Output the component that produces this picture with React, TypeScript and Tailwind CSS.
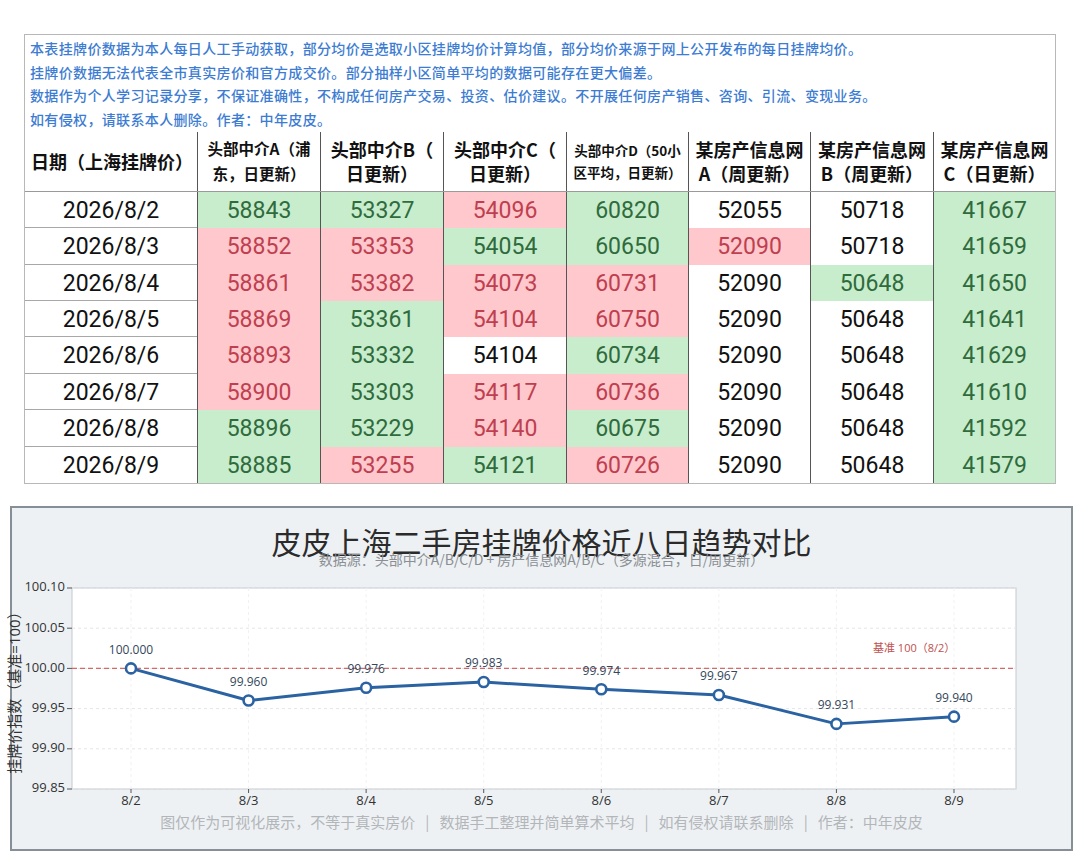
import React from "react";

type Tone = "g" | "r" | "n";

const toneClass: Record<Tone, string> = {
  g: "bg-[#c8edcd] text-[#2f6b3c]",
  r: "bg-[#fec8cd] text-[#bf3f50]",
  n: "bg-white text-[#111]",
};

// date, then "value+tone" for A/B/C/D/网A/网B/网C
const rows: [string, string][] = [
  ["2026/8/2", "58843g 53327g 54096r 60820g 52055n 50718n 41667g"],
  ["2026/8/3", "58852r 53353r 54054g 60650g 52090r 50718n 41659g"],
  ["2026/8/4", "58861r 53382r 54073r 60731r 52090n 50648g 41650g"],
  ["2026/8/5", "58869r 53361g 54104r 60750r 52090n 50648n 41641g"],
  ["2026/8/6", "58893r 53332g 54104n 60734g 52090n 50648n 41629g"],
  ["2026/8/7", "58900r 53303g 54117r 60736r 52090n 50648n 41610g"],
  ["2026/8/8", "58896g 53229g 54140r 60675g 52090n 50648n 41592g"],
  ["2026/8/9", "58885g 53255r 54121g 60726r 52090n 50648n 41579g"],
];

const notes = [
  "本表挂牌价数据为本人每日人工手动获取，部分均价是选取小区挂牌均价计算均值，部分均价来源于网上公开发布的每日挂牌均价。",
  "挂牌价数据无法代表全市真实房价和官方成交价。部分抽样小区简单平均的数据可能存在更大偏差。",
  "数据作为个人学习记录分享，不保证准确性，不构成任何房产交易、投资、估价建议。不开展任何房产销售、咨询、引流、变现业务。",
  "如有侵权，请联系本人删除。作者：中年皮皮。",
];

const gridCols = "grid grid-cols-[172px_123px_123px_123px_122px_122px_123px_122px]";

function PriceTable() {
  return (
    <div className="ml-[24px] mt-[34px] w-[1032px] border border-[#b8b8b8] font-['Noto_Sans_CJK_SC',sans-serif]">
      <div className="px-[5px] pt-[2px] text-[14px] leading-[23.7px] font-medium tracking-[0.35px] text-[#3c7cd2]">
        {notes.map((n) => (
          <div key={n}>{n}</div>
        ))}
      </div>

      <div className={`${gridCols} h-[60px] border-b border-[#9a9a9a] text-[#111] font-semibold`}>
        <div className="flex items-center pl-[6px] text-[18px]">日期（上海挂牌价）</div>
        <div className="flex flex-col items-center justify-center border-l border-[#555] text-[15.5px] leading-[25px]">
          <span>头部中介A（浦</span>
          <span>东，日更新）</span>
        </div>
        {["B", "C"].map((k) => (
          <div key={k} className="flex flex-col items-center justify-center border-l border-[#555] text-[18px] leading-[24px]">
            <span>头部中介{k}（</span>
            <span>日更新）</span>
          </div>
        ))}
        <div className="flex flex-col items-center justify-center border-l border-[#555] text-[13.5px] leading-[22px]">
          <span>头部中介D（50小</span>
          <span>区平均，日更新）</span>
        </div>
        {[
          ["A", "周"],
          ["B", "周"],
          ["C", "日"],
        ].map(([k, f]) => (
          <div key={k} className="flex flex-col items-center justify-center border-l border-[#555] text-[18px] leading-[24px]">
            <span>某房产信息网</span>
            <span>{k}（{f}更新）</span>
          </div>
        ))}
      </div>

      {rows.map(([date, line], ri) => (
        <div
          key={date}
          className={`${gridCols} h-[36.4px] ${ri < rows.length - 1 ? "border-b border-[#a8a8a8]" : ""} pt-[2px] font-['Roboto','Noto_Sans_CJK_SC',sans-serif] text-[23px]`}
        >
          <div className="flex items-center justify-center text-[#111]">{date}</div>
          {line.split(" ").map((cell, ci) => {
            const tone = cell.slice(-1) as Tone;
            return (
              <div key={ci} className={`-mt-[2px] pt-[2px] flex items-center justify-center border-l border-[#555] ${toneClass[tone]}`}>
                {cell.slice(0, -1)}
              </div>
            );
          })}
        </div>
      ))}
    </div>
  );
}

const values = [100.0, 99.96, 99.976, 99.983, 99.974, 99.967, 99.931, 99.94];
const days = ["8/2", "8/3", "8/4", "8/5", "8/6", "8/7", "8/8", "8/9"];
const ticks = [100.1, 100.05, 100.0, 99.95, 99.9, 99.85];

const PX0 = 60;
const PX1 = 1004;
const PY0 = 14;
const PY1 = 215;
const xAt = (i: number) => 119 + i * 117.57;
const yAt = (v: number) => PY0 + ((100.1 - v) / 0.05) * 40.2;

function TrendChart() {
  const pts = values.map((v, i) => `${xAt(i)},${yAt(v)}`).join(" ");
  const font = "'Open Sans','Noto Sans CJK SC',sans-serif";
  return (
    <svg width={1059} height={237} className="mt-[6px] block overflow-visible">
      <rect x={PX0} y={PY0} width={PX1 - PX0} height={PY1 - PY0} fill="#fff" stroke="#c4c9ce" />
      {ticks.map((t) => (
        <g key={t}>
          <line x1={PX0} x2={PX1} y1={yAt(t)} y2={yAt(t)} stroke="#e3e5e8" strokeDasharray="3 3" />
          <line x1={PX0 - 5} x2={PX0} y1={yAt(t)} y2={yAt(t)} stroke="#555" />
          <text x={PX0 - 7} y={yAt(t)} textAnchor="end" dominantBaseline="middle" fontSize={13} fill="#333" fontFamily={font}>
            {t.toFixed(2)}
          </text>
        </g>
      ))}
      {days.map((d, i) => (
        <g key={d}>
          <line x1={xAt(i)} x2={xAt(i)} y1={PY0} y2={PY1} stroke="#f0f1f3" strokeDasharray="3 3" />
          <line x1={xAt(i)} x2={xAt(i)} y1={PY1} y2={PY1 + 4} stroke="#555" />
          <text x={xAt(i)} y={228} textAnchor="middle" dominantBaseline="middle" fontSize={13} fill="#333" fontFamily={font}>
            {d}
          </text>
        </g>
      ))}
      <line x1={PX0} x2={PX1} y1={yAt(100)} y2={yAt(100)} stroke="#d46a6a" strokeWidth={1.2} strokeDasharray="5 3" />
      <text x={861} y={75} dominantBaseline="middle" fontSize={11} fill="#c0504d" fontFamily={font}>
        基准 100（8/2）
      </text>
      <polyline points={pts} fill="none" stroke="#2a62a2" strokeWidth={3} strokeLinejoin="round" />
      {values.map((v, i) => (
        <g key={i}>
          <circle cx={xAt(i)} cy={yAt(v)} r={5} fill="#fff" stroke="#2a62a2" strokeWidth={2.6} />
          <text x={xAt(i)} y={yAt(v) - 18} textAnchor="middle" dominantBaseline="middle" fontSize={12} fill="#34475b" fontFamily={font}>
            {v.toFixed(3)}
          </text>
        </g>
      ))}
      <text
        x={4}
        y={115}
        transform="rotate(-90 4 115)"
        textAnchor="middle"
        dominantBaseline="middle"
        fontSize={15}
        fill="#333"
        fontFamily={font}
      >
        挂牌价指数（基准=100）
      </text>
    </svg>
  );
}

export default function App() {
  return (
    <div className="w-[1080px] h-[857px] bg-white overflow-hidden">
      <PriceTable />
      <div className="ml-[10px] mt-[22px] w-[1063px] h-[345px] border-2 border-[#868f95] bg-[#edf1f4] font-['Noto_Sans_CJK_SC',sans-serif]">
        <div className="mt-[15px] text-center text-[30px] leading-[36px] text-[#2b2b2b]">
          皮皮上海二手房挂牌价格近八日趋势对比
        </div>
        <div className="-mt-[9px] text-center text-[14px] leading-[18px] text-[#8b8f93]">
          数据源：头部中介A/B/C/D + 房产信息网A/B/C（多源混合，日/周更新）
        </div>
        <TrendChart />
        <div className="mt-[1px] text-center text-[15px] leading-[20px] text-[#b3b6b9] whitespace-pre">
          {"图仅作为可视化展示，不等于真实房价   |   数据手工整理并简单算术平均   |   如有侵权请联系删除   |   作者：中年皮皮"}
        </div>
      </div>
    </div>
  );
}
